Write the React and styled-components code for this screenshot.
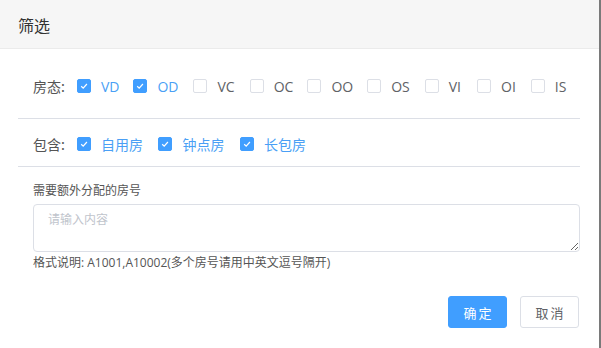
import React from "react";
import styled, { createGlobalStyle } from "styled-components";

const Global = createGlobalStyle`
  html, body { margin: 0; padding: 0; background: #fff; }
  body { font-family: "Open Sans", "Noto Sans CJK SC", sans-serif; }
  * { box-sizing: border-box; }
`;

const Dialog = styled.div`
  width: 601px;
  height: 348px;
  background: #fff;
  border-right: 2px solid #7a7a7a;
  display: flex;
  flex-direction: column;
`;

const Header = styled.div`
  height: 49px;
  flex-shrink: 0;
  background: #f6f6f6;
  border-bottom: 1px solid #ebebeb;
  display: flex;
  align-items: center;
  padding-left: 18px;
  padding-top: 2px;
  font-size: 16px;
  color: #333;
`;

const Body = styled.div`
  padding: 0 19px 0 18px;
  display: flex;
  flex-direction: column;
`;

const Section = styled.div`
  height: ${(p) => p.$h}px;
  display: flex;
  align-items: center;
  padding-left: 15px;
  border-bottom: 1px solid #dcdfe6;
  padding-top: ${(p) => p.$pt || 0}px;
`;

const Label = styled.span`
  font-size: 14px;
  color: #555;
  margin-right: 12px;
  font-family: "Noto Sans CJK SC", sans-serif;
`;

const Item = styled.label`
  display: flex;
  align-items: center;
  margin-right: ${(p) => p.$mr}px;
  font-size: 14px;
  color: ${(p) => (p.$on ? "#4a9ff5" : "#606266")};
  font-family: "Open Sans", "Noto Sans CJK SC", sans-serif;
`;

const Box = styled.span`
  width: 14px;
  height: 14px;
  border-radius: 2px;
  border: 1px solid ${(p) => (p.$on ? "#409eff" : "#dcdfe6")};
  background: ${(p) => (p.$on ? "#409eff" : "#fff")};
  margin-right: 10px;
  display: flex;
  align-items: center;
  justify-content: center;
`;

const Check = () => (
  <svg width="10" height="10" viewBox="0 0 10 10">
    <path d="M2.2 5.2 L4.2 7.1 L7.9 3" fill="none" stroke="#fff" strokeWidth="1.2" />
  </svg>
);

const Field = styled.div`
  padding-left: 15px;
  padding-top: 14px;
  display: flex;
  flex-direction: column;
`;

const FieldLabel = styled.div`
  font-size: 12px;
  color: #555;
  line-height: 18px;
  margin-bottom: 5px;
  font-family: "Noto Sans CJK SC", sans-serif;
`;

const TextArea = styled.textarea`
  width: 547px;
  height: 48px;
  border: 1px solid #dcdfe6;
  border-radius: 4px;
  padding: 5px 14px;
  font-size: 12px;
  line-height: 18px;
  font-family: "Noto Sans CJK SC", sans-serif;
  color: #606266;
  resize: vertical;
  outline: none;
  display: block;
  &::placeholder { color: #c0c4cc; }
`;

const Hint = styled.div`
  font-size: 12px;
  line-height: 20px;
  color: #555;
  margin-top: 1px;
  font-family: "Open Sans", "Noto Sans CJK SC", sans-serif;
`;

const Footer = styled.div`
  display: flex;
  justify-content: flex-end;
  gap: 13px;
  padding-top: 23px;
  padding-right: 1px;
`;

const Button = styled.button`
  width: 59px;
  height: 32px;
  border-radius: 3px;
  font-size: 13px;
  letter-spacing: 2px;
  padding: 0 0 0 2px;
  font-family: "Noto Sans CJK SC", sans-serif;
  border: 1px solid ${(p) => (p.$primary ? "#409eff" : "#dcdfe6")};
  background: ${(p) => (p.$primary ? "#409eff" : "#fff")};
  color: ${(p) => (p.$primary ? "#fff" : "#606266")};
`;

const states = [
  ["VD", true, 14],
  ["OD", true, 15],
  ["VC", false, 15],
  ["OC", false, 14],
  ["OO", false, 14],
  ["OS", false, 15],
  ["VI", false, 16],
  ["OI", false, 15],
  ["IS", false, 0],
];

const kinds = ["自用房", "钟点房", "长包房"];

export default function App() {
  return (
    <>
      <Global />
      <Dialog>
        <Header>筛选</Header>
        <Body>
          <Section $h={70} $pt={5}>
            <Label>房态:</Label>
            {states.map(([t, on, mr]) => (
              <Item key={t} $on={on} $mr={mr}>
                <Box $on={on}>{on && <Check />}</Box>
                {t}
              </Item>
            ))}
          </Section>
          <Section $h={48} $pt={2}>
            <Label>包含:</Label>
            {kinds.map((t) => (
              <Item key={t} $on $mr={15.5}>
                <Box $on>
                  <Check />
                </Box>
                {t}
              </Item>
            ))}
          </Section>
          <Field>
            <FieldLabel>需要额外分配的房号</FieldLabel>
            <TextArea placeholder="请输入内容" rows={2} />
            <Hint>格式说明: A1001,A10002(多个房号请用中英文逗号隔开)</Hint>
          </Field>
          <Footer>
            <Button $primary>确定</Button>
            <Button>取消</Button>
          </Footer>
        </Body>
      </Dialog>
    </>
  );
}
